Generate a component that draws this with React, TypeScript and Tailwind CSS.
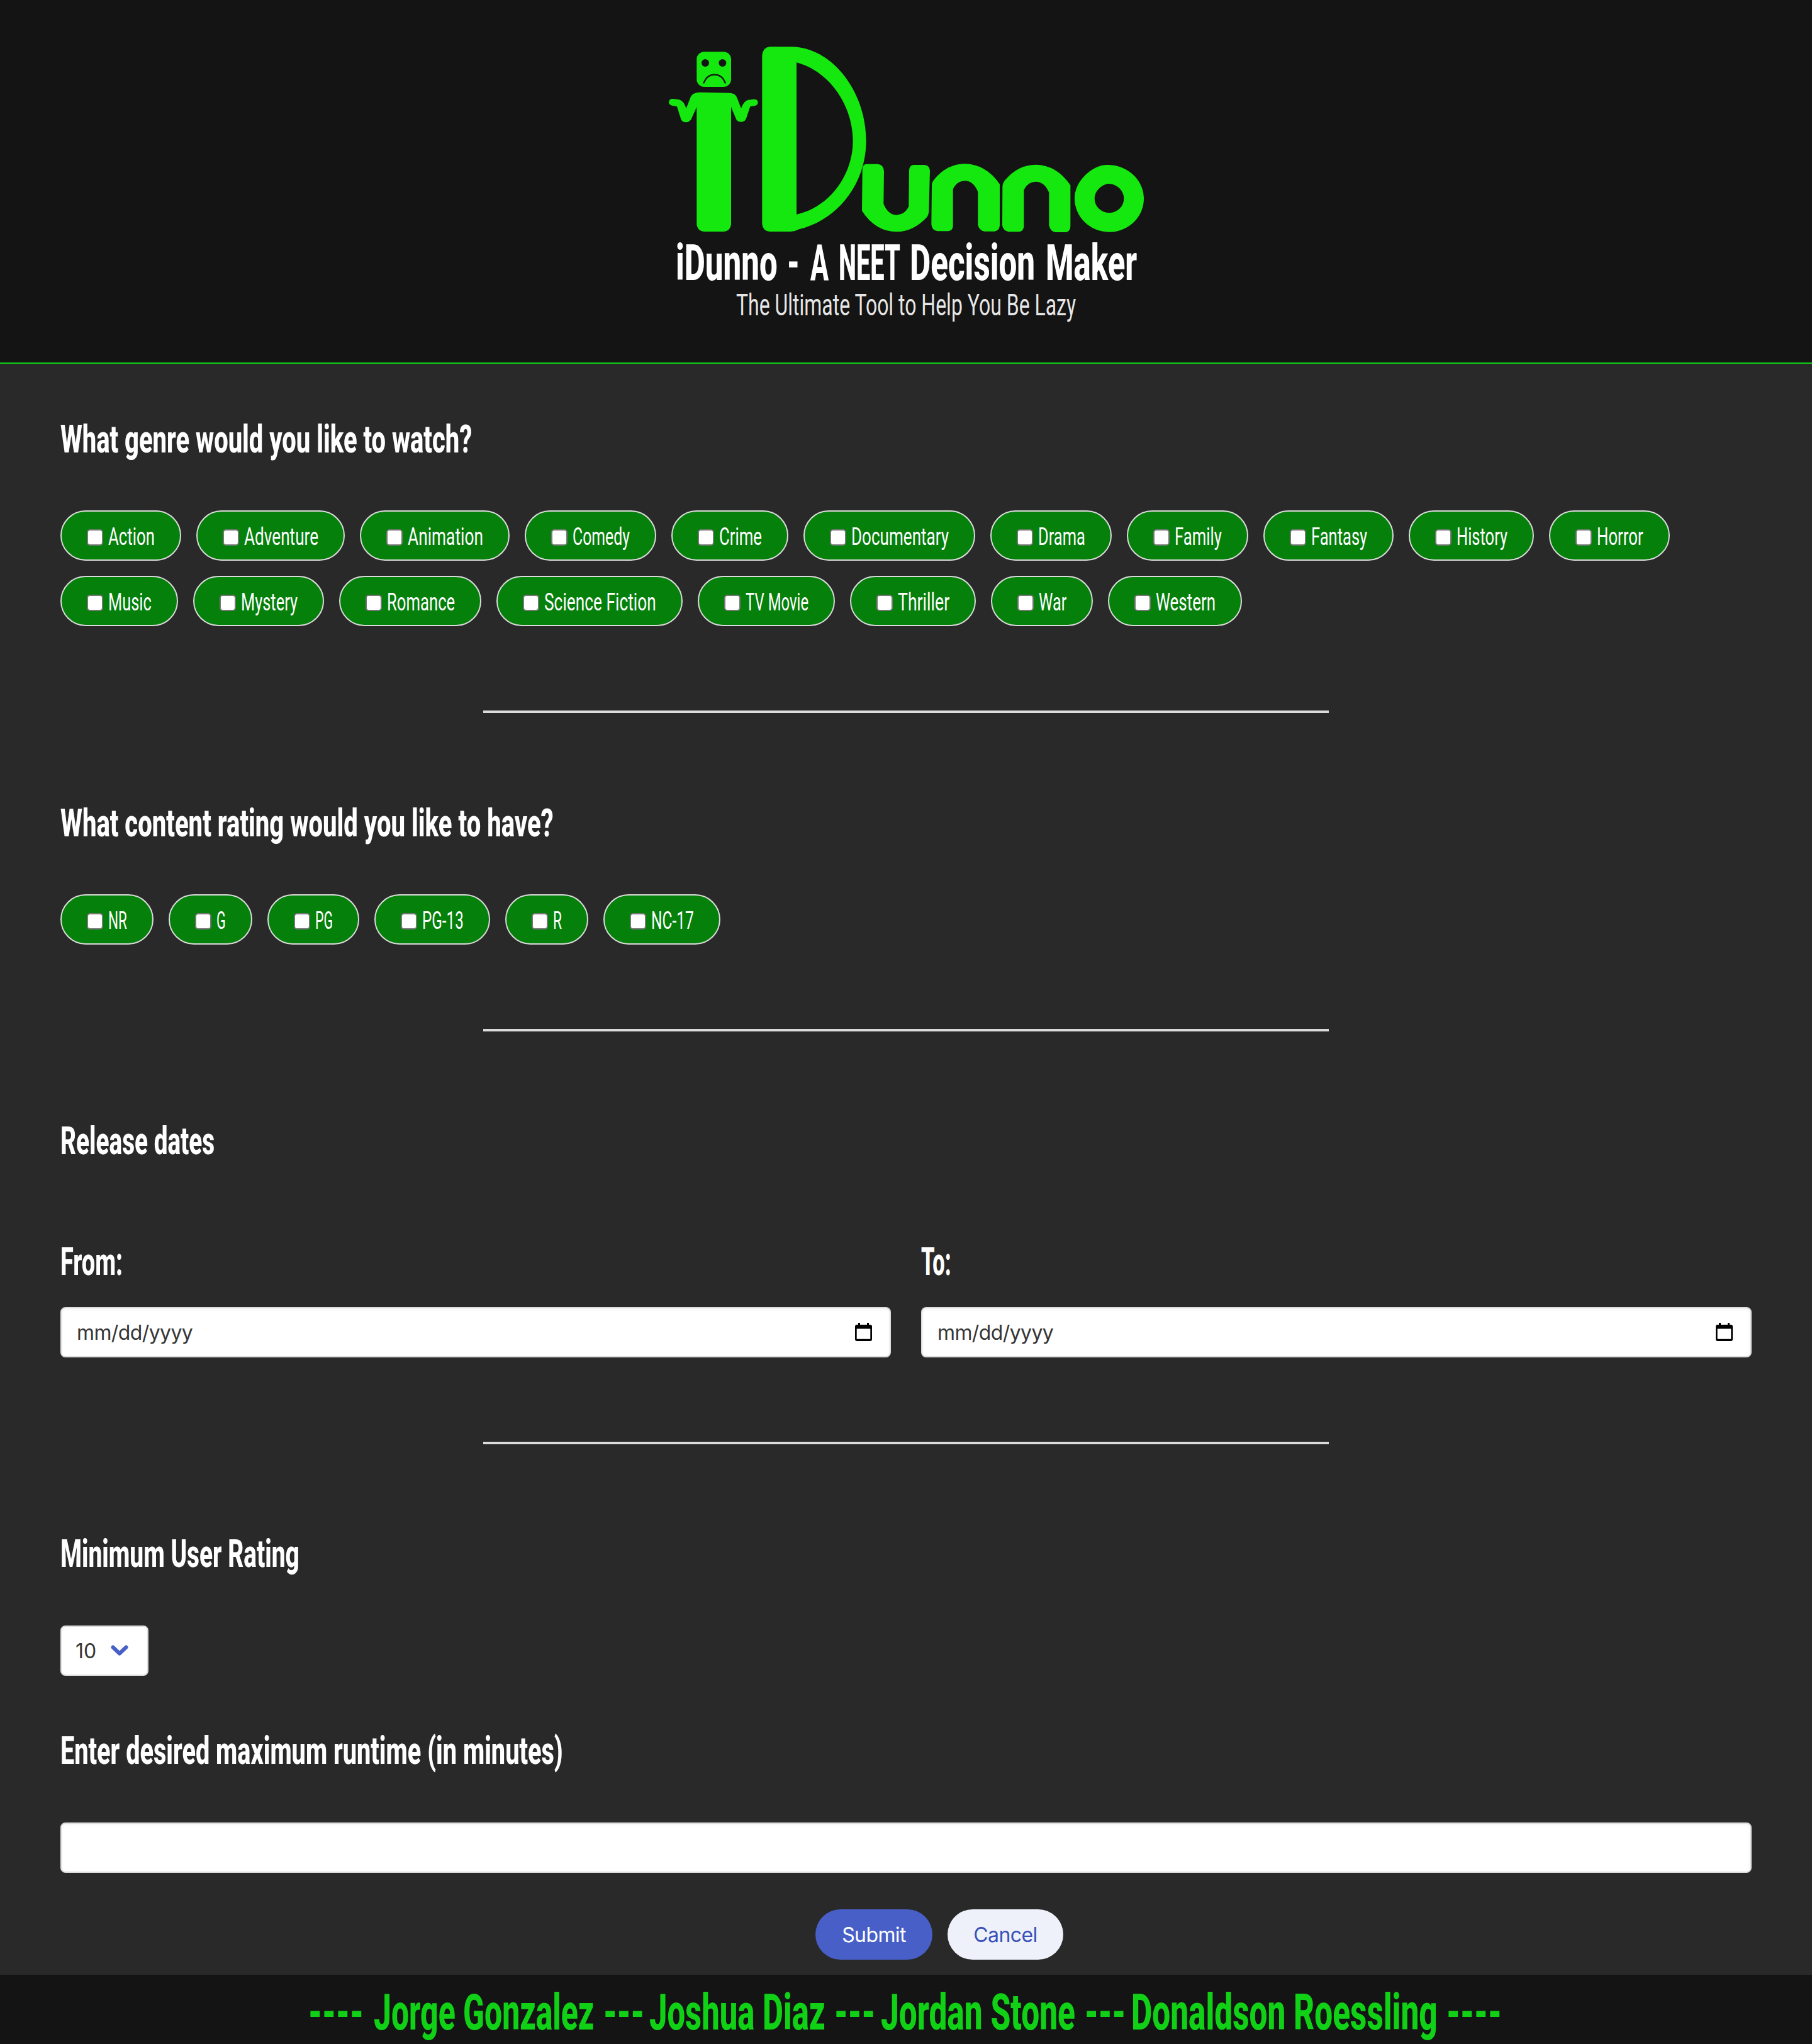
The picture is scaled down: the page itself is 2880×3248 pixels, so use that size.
import { useLayoutEffect, useRef, useState } from "react";

const GENRES: [string, number][] = [
  ["Action", 192], ["Adventure", 236], ["Animation", 238], ["Comedy", 209], ["Crime", 186],
  ["Documentary", 273], ["Drama", 193], ["Family", 193], ["Fantasy", 207], ["History", 199],
  ["Horror", 192], ["Music", 187], ["Mystery", 208], ["Romance", 226], ["Science Fiction", 296],
  ["TV Movie", 218], ["Thriller", 200], ["War", 162], ["Western", 213],
];

const RATINGS: [string, number][] = [
  ["NR", 148], ["G", 133], ["PG", 146], ["PG-13", 184], ["R", 132], ["NC-17", 186],
];

/* Condensed lettering: squeezes a line of text horizontally to the given width. */
function Condensed({ text, width, className = "" }: { text: string; width: number; className?: string }) {
  const ref = useRef<HTMLSpanElement>(null);
  const [scale, setScale] = useState(0.6);
  useLayoutEffect(() => {
    if (ref.current) setScale(width / ref.current.offsetWidth);
  }, [text, width]);
  return (
    <span className={"block shrink-0 whitespace-nowrap font-['Roboto',sans-serif] " + className} style={{ width }}>
      <span ref={ref} className="inline-block origin-left align-top" style={{ transform: `scaleX(${scale})` }}>
        {text}
      </span>
    </span>
  );
}

function Heading({ text, width, className = "" }: { text: string; width: number; className?: string }) {
  return (
    <h2 className={"h-[72px] " + className}>
      <Condensed text={text} width={width} className="text-[61px] leading-[70px] font-extrabold text-white" />
    </h2>
  );
}

function Pill({ label, width }: { label: string; width: number }) {
  return (
    <label
      className="flex h-20 items-center rounded-full border-2 border-[#dbdbdb] bg-[#05800b] pl-10"
      style={{ width }}
    >
      <span className="mt-[6px] mr-2 size-[26px] shrink-0 rounded-[5px] border-2 border-[#767676] bg-white" />
      <Condensed text={label} width={width - 118} className="pt-1 text-[39px] leading-[76px] font-normal text-white" />
    </label>
  );
}

function Divider() {
  return <div className="mx-auto mt-[134px] h-1 w-[1344px] bg-[#dbdbdb]" />;
}

function DateField({ label, width }: { label: string; width: number }) {
  return (
    <div className="flex-1">
      <Heading text={label} width={width} />
      <div className="mt-[35px] flex h-20 items-center justify-between rounded-lg border-2 border-[#dbdbdb] bg-white pr-[28px] pl-[24px] text-[#363636] shadow-[inset_0_2px_4px_rgba(10,10,10,0.05)]">
        <span className="pt-[2px] font-['Inter',sans-serif] text-[32px] tracking-[-0.6px]">mm/dd/yyyy</span>
        <svg width="27" height="29" viewBox="0 0 27 29" className="mb-[2px]">
          <path d="M5 0h3v3h11V0h3v3h2a3 3 0 0 1 3 3v20a3 3 0 0 1-3 3H3a3 3 0 0 1-3-3V6a3 3 0 0 1 3-3h2zM2.7 9.5v16.3h21.6V9.5z" fill="#000" fillRule="evenodd" />
        </svg>
      </div>
    </div>
  );
}

function Logo() {
  return (
    <svg width="756" height="298" viewBox="66 72 2268 894" fill="#14e80e" className="block">
      <rect x="202" y="97" width="164" height="167" rx="36" />
      <circle cx="243" cy="150" r="18" fill="#141414" />
      <circle cx="325" cy="150" r="18" fill="#141414" />
      <path d="M236 245C246 219 263 206 287 206S328 219 338 245" fill="none" stroke="#141414" strokeWidth="7" strokeLinecap="round" />
      <path d="M215 290L360 293Q388 296 394 315L414 367Q425 332 448 326L478 323Q494 324 494 339Q493 352 478 355L457 358L438 415Q433 430 417 431Q398 432 391 420L366 360V920Q362 950 332 954H236Q206 950 202 920V360L176 418Q168 433 150 433Q132 433 127 418L108 358L84 353Q69 350 69 337Q71 321 88 321L118 325Q140 330 152 367L173 313Q180 292 215 290Z" />
      <path fillRule="evenodd" d="M550 73H650C850 73 1010 290 1010 520C1010 730 870 900 690 943Q670 954 650 954H550Q518 952 514 918V112Q518 77 550 73ZM678 148C830 185 947 350 947 520C947 690 830 840 678 872Z" />
      <path d="M1010 632H1065Q1093 635 1095 665L1093 822Q1115 875 1156 875Q1195 873 1213 835L1215 660Q1218 638 1235 636H1288Q1312 640 1314 662L1309 860Q1308 873 1300 885Q1235 955 1156 955Q1055 955 990 855L992 660Q993 634 1010 632Z" />
      <path d="M1323 735Q1323 718 1335 705Q1395 632 1480 631Q1580 632 1647 728V925Q1645 950 1622 953H1575Q1548 950 1543 922V765Q1522 712 1480 712Q1442 713 1424 752V930Q1421 950 1402 952H1350Q1324 948 1321 920Z" />
      <path d="M1660 740Q1661 722 1673 708Q1733 636 1818 635Q1918 636 1984 733V930Q1982 955 1962 957H1912Q1888 953 1882 925V768Q1860 716 1818 716Q1780 717 1762 755V930Q1759 953 1740 955H1690Q1664 952 1659 925Z" />
      <path fillRule="evenodd" d="M2155 636C2250 632 2334 705 2334 796S2260 956 2169 956S2004 885 2004 796C2004 720 2070 655 2135 638ZM2160 726C2125 735 2099 765 2099 796A70 69 0 0 0 2239 796C2239 760 2205 723 2160 726Z" />
    </svg>
  );
}

const TITLE_TEXT = "text-[80px] leading-[80px] font-extrabold text-white";
const FOOTER_TEXT = "text-[80px] leading-[108px] font-extrabold text-[#11d116]";

export default function App() {
  return (
    <div className="flex h-[3248px] w-[2880px] flex-col overflow-hidden bg-[#292929]">
      <header className="flex h-[578px] shrink-0 flex-col items-center border-b-2 border-[#11d116] bg-[#141414] pt-[74px]">
        <Logo />
        <h1 className="mt-[6px] flex h-[81px]">
          <Condensed text="iDunno" width={162} className={TITLE_TEXT} />
          <Condensed text="-" width={20} className={"ml-[15px] " + TITLE_TEXT} />
          <Condensed text="A" width={29} className={"ml-[17px] " + TITLE_TEXT} />
          <Condensed text="NEET" width={98} className={"ml-[16px] " + TITLE_TEXT} />
          <Condensed text="Decision" width={199} className={"ml-[15px] " + TITLE_TEXT} />
          <Condensed text="Maker" width={145} className={"ml-[17px] " + TITLE_TEXT} />
        </h1>
        <Condensed text="The Ultimate Tool to Help You Be Lazy" width={540} className="text-[48px] leading-[52px] font-normal text-[#e6e6e6]" />
      </header>

      <main className="flex h-[2560px] shrink-0 flex-col px-24 pt-[85px]">
        <Heading text="What genre would you like to watch?" width={654} />
        <div className="mt-[76px] flex flex-wrap gap-6">
          {GENRES.map(([label, width]) => <Pill key={label} label={label} width={width} />)}
        </div>
        <Divider />

        <Heading text="What content rating would you like to have?" width={784} className="mt-[140px]" />
        <div className="mt-[76px] flex gap-6">
          {RATINGS.map(([label, width]) => <Pill key={label} label={label} width={width} />)}
        </div>
        <Divider />

        <Heading text="Release dates" width={245} className="mt-[139px]" />
        <div className="mt-[120px] flex gap-12">
          <DateField label="From:" width={99} />
          <DateField label="To:" width={48} />
        </div>
        <Divider />

        <Heading text="Minimum User Rating" width={380} className="mt-[139px]" />
        <div className="mt-[77px] flex h-20 w-[140px] items-center rounded-lg border-2 border-[#dbdbdb] bg-white pl-[22px]">
          <span className="w-[56px] pt-[2px] font-['Inter',sans-serif] text-[32px] text-[#363636]">10</span>
          <svg width="28" height="18" viewBox="0 0 28 18">
            <path d="M3.5 3.5L14 13.5L24.5 3.5" fill="none" stroke="#485fc7" strokeWidth="6" strokeLinecap="round" strokeLinejoin="round" />
          </svg>
        </div>

        <Heading text="Enter desired maximum runtime (in minutes)" width={799} className="mt-[84px]" />
        <div className="mt-[77px] h-20 rounded-lg border-2 border-[#dbdbdb] bg-white shadow-[inset_0_2px_4px_rgba(10,10,10,0.05)]" />

        <div className="mt-[58px] flex justify-center gap-6 pl-[106px] font-['Inter',sans-serif] text-[32px]">
          <button className="h-20 w-[186px] rounded-full bg-[#485fc7] pt-[2px] tracking-[-0.6px] text-white">Submit</button>
          <button className="h-20 w-[184px] rounded-full bg-[#eff1fa] pt-[2px] tracking-[-0.6px] text-[#3850b7]">Cancel</button>
        </div>
      </main>

      <footer className="flex h-[110px] shrink-0 bg-[#141414] pt-[6px] pl-[490px]">
        <Condensed text="----" width={88} className={FOOTER_TEXT} />
        <Condensed text="Jorge Gonzalez" width={350} className={"ml-[16px] " + FOOTER_TEXT} />
        <Condensed text="---" width={65} className={"ml-[15px] " + FOOTER_TEXT} />
        <Condensed text="Joshua Diaz" width={280} className={"ml-[8px] " + FOOTER_TEXT} />
        <Condensed text="---" width={65} className={"ml-[14px] " + FOOTER_TEXT} />
        <Condensed text="Jordan Stone" width={309} className={"ml-[9px] " + FOOTER_TEXT} />
        <Condensed text="---" width={65} className={"ml-[15px] " + FOOTER_TEXT} />
        <Condensed text="Donaldson Roessling" width={487} className={"ml-[9px] " + FOOTER_TEXT} />
        <Condensed text="----" width={88} className={"ml-[14px] " + FOOTER_TEXT} />
      </footer>
    </div>
  );
}
